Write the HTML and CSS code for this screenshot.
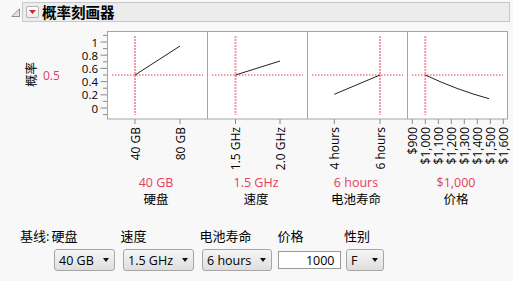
FILE: index.html
```html
<!DOCTYPE html>
<html lang="zh">
<head>
<meta charset="utf-8" />
<title>概率刻画器</title>
<link rel="stylesheet" href="styles.css">
</head>
<body>
<div class="outline">
  <svg class="disclose" width="9" height="9" viewBox="0 0 9 9"><path d="M8.5,0.8 L8.5,8.5 L0.8,8.5 Z" fill="#e4e4e4" stroke="#8c8c8c" stroke-width="1"/></svg>
  <div class="bar">
    <span class="menu-btn"><svg width="7" height="4" viewBox="0 0 7 4"><path d="M0,0 L7,0 L3.5,4 Z" fill="#e0202e"/></svg></span>
    <span class="title">概率刻画器</span>
  </div>
</div>

<svg class="profiler" width="513" height="147" viewBox="0 28 513 147">
  <text class="axis-title" transform="translate(31.5,74.5) rotate(-90)">概率</text>
  <text class="ref-val" x="43" y="75.5">0.5</text>

  <!-- y axis -->
  <g class="ticks">
    <line x1="103" y1="114.6" x2="107" y2="114.6"/>
    <line x1="100.5" y1="108" x2="107" y2="108"/>
    <line x1="103" y1="101.4" x2="107" y2="101.4"/>
    <line x1="100.5" y1="94.8" x2="107" y2="94.8"/>
    <line x1="103" y1="88.2" x2="107" y2="88.2"/>
    <line x1="100.5" y1="81.6" x2="107" y2="81.6"/>
    <line x1="103" y1="75" x2="107" y2="75"/>
    <line x1="100.5" y1="68.4" x2="107" y2="68.4"/>
    <line x1="103" y1="61.8" x2="107" y2="61.8"/>
    <line x1="100.5" y1="55.2" x2="107" y2="55.2"/>
    <line x1="103" y1="48.6" x2="107" y2="48.6"/>
    <line x1="100.5" y1="42" x2="107" y2="42"/>
    <line x1="103" y1="35.4" x2="107" y2="35.4"/>
  </g>
  <g class="y-labels">
    <text x="98" y="108">0</text>
    <text x="98" y="94.8">0.2</text>
    <text x="98" y="81.6">0.4</text>
    <text x="98" y="68.4">0.6</text>
    <text x="98" y="55.2">0.8</text>
    <text x="98" y="42">1</text>
  </g>

  <!-- panels -->
  <rect class="frame" x="107.5" y="31.5" width="400" height="87.5"/>
  <line class="frame" x1="207.5" y1="31.5" x2="207.5" y2="119"/>
  <line class="frame" x1="307.5" y1="31.5" x2="307.5" y2="119"/>
  <line class="frame" x1="407.5" y1="31.5" x2="407.5" y2="119"/>

  <g class="h-ref">
    <line x1="112" y1="75" x2="203" y2="75"/>
    <line x1="212" y1="75" x2="303" y2="75"/>
    <line x1="312" y1="75" x2="403" y2="75"/>
    <line x1="412" y1="75" x2="503" y2="75"/>
  </g>
  <g class="v-ref">
    <line x1="135" y1="36" x2="135" y2="115"/>
    <line x1="235.5" y1="36" x2="235.5" y2="115"/>
    <line x1="380" y1="36" x2="380" y2="115"/>
    <line x1="425.3" y1="36" x2="425.3" y2="115"/>
  </g>
  <g class="curve">
    <path d="M135,75 L180,46"/>
    <path d="M235.5,75 L280,61"/>
    <path d="M334.3,94.3 L380,75"/>
    <path d="M425.3,75 Q457,90 489,98.7"/>
  </g>

  <!-- x axes -->
  <g class="ticks">
    <line x1="135" y1="119" x2="135" y2="124"/>
    <line x1="180" y1="119" x2="180" y2="124"/>
    <line x1="235.5" y1="119" x2="235.5" y2="124"/>
    <line x1="280" y1="119" x2="280" y2="124"/>
    <line x1="334.3" y1="119" x2="334.3" y2="124"/>
    <line x1="380" y1="119" x2="380" y2="124"/>
    <line x1="412.3" y1="119" x2="412.3" y2="124"/>
    <line x1="425.3" y1="119" x2="425.3" y2="124"/>
    <line x1="438.3" y1="119" x2="438.3" y2="124"/>
    <line x1="451.3" y1="119" x2="451.3" y2="124"/>
    <line x1="464.3" y1="119" x2="464.3" y2="124"/>
    <line x1="477.3" y1="119" x2="477.3" y2="124"/>
    <line x1="490.3" y1="119" x2="490.3" y2="124"/>
    <line x1="503.3" y1="119" x2="503.3" y2="124"/>
  </g>
  <g class="x-labels">
    <text transform="translate(135,127) rotate(-90)">40 GB</text>
    <text transform="translate(180,127) rotate(-90)">80 GB</text>
    <text transform="translate(235.5,127) rotate(-90)">1.5 GHz</text>
    <text transform="translate(280,127) rotate(-90)">2.0 GHz</text>
    <text transform="translate(334.3,127) rotate(-90)">4 hours</text>
    <text transform="translate(380,127) rotate(-90)">6 hours</text>
    <text transform="translate(412.3,127) rotate(-90)">$900</text>
    <text transform="translate(425.3,127) rotate(-90)">$1,000</text>
    <text transform="translate(438.3,127) rotate(-90)">$1,100</text>
    <text transform="translate(451.3,127) rotate(-90)">$1,200</text>
    <text transform="translate(464.3,127) rotate(-90)">$1,300</text>
    <text transform="translate(477.3,127) rotate(-90)">$1,400</text>
    <text transform="translate(490.3,127) rotate(-90)">$1,500</text>
    <text transform="translate(503.3,127) rotate(-90)">$1,600</text>
  </g>
</svg>

<div class="levels">
  <div class="level"><div class="level-value">40 GB</div><div class="level-name">硬盘</div></div>
  <div class="level"><div class="level-value">1.5 GHz</div><div class="level-name">速度</div></div>
  <div class="level"><div class="level-value">6 hours</div><div class="level-name">电池寿命</div></div>
  <div class="level"><div class="level-value">$1,000</div><div class="level-name">价格</div></div>
</div>

<div class="baseline">
  <span class="base-label">基线:</span>
  <div class="field">
    <span class="field-label">硬盘</span>
    <span class="select w-disk">40 GB<i class="caret"></i></span>
  </div>
  <div class="field">
    <span class="field-label">速度</span>
    <span class="select w-speed">1.5 GHz<i class="caret"></i></span>
  </div>
  <div class="field">
    <span class="field-label">电池寿命</span>
    <span class="select w-battery">6 hours<i class="caret"></i></span>
  </div>
  <div class="field">
    <span class="field-label">价格</span>
    <input class="price-input" type="text" value="1000">
  </div>
  <div class="field field-gender">
    <span class="field-label">性别</span>
    <span class="select w-gender">F<i class="caret"></i></span>
  </div>
</div>
</body>
</html>
```

FILE: styles.css
```css
body {
  margin:0; background:#f8f8f8; color:#000;
  font-family:"Open Sans","Noto Sans CJK SC",sans-serif; font-size:13px;
}
.outline {
  display:flex; align-items:center; padding:2px 3px 0 11px; height:20px;
}
.disclose { margin-right:2px; margin-top:1px; }
.bar {
  flex:1; height:18px; display:flex; align-items:center; gap:3px;
  background:#ececec; border:1px solid #c8c8c8; padding-left:3px;
}
.menu-btn {
  width:11px; height:10px; display:flex; align-items:center; justify-content:center;
  border:1px solid #b4b4b4; border-radius:2px; background:linear-gradient(#fff,#ececec);
}
.title {
  font-family:"Noto Sans CJK SC",sans-serif; font-weight:700; font-size:14.5px; line-height:18px;
}
.profiler { display:block; margin-top:6px; }
.profiler text { font-family:"Open Sans","Noto Sans CJK SC",sans-serif; font-size:12px; dominant-baseline:central; }
.profiler .axis-title { font-size:12.5px; text-anchor:middle; }
.profiler .ref-val { fill:#e63d5c; }
.profiler .y-labels text { text-anchor:end; font-size:11.5px; }
.x-labels text { text-anchor:end; }
.ticks line { stroke:#8a8a8a; stroke-width:1; }
.frame { fill:#fff; stroke:#a4a4a4; stroke-width:1; }
line.frame { fill:none; }
.h-ref line { stroke:#d4385a; stroke-width:1; stroke-dasharray:1.5 1.5; }
.v-ref line { stroke:#f29aac; stroke-width:2; stroke-dasharray:2 1; }
.curve path { fill:none; stroke:#222; stroke-width:1; }

.levels {
  display:grid; grid-template-columns:repeat(4,100px); padding-left:106px;
}
.level { text-align:center; }
.level-value { color:#e63d5c; font-size:12.5px; line-height:16px; }
.level-name { font-size:12.5px; line-height:17px; }

.baseline {
  display:flex; align-items:flex-start; gap:5.5px; padding:20px 0 0 20px;
}
.base-label { flex:none; width:26px; min-width:0; white-space:nowrap; line-height:17px; }
.field { display:flex; flex-direction:column; }
.field-label { line-height:17px; margin-bottom:4px; white-space:nowrap; }
.select {
  height:20px; margin-left:2.5px; padding:0 5px 0 4px;
  display:flex; align-items:center; justify-content:space-between;
  border:1px solid #a6a6a6; border-radius:3px;
  background:linear-gradient(#f6f6f6,#dedede);
  font-size:12.5px;
}
.caret {
  width:0; height:0; border-left:3.5px solid transparent; border-right:3.5px solid transparent;
  border-top:4px solid #111;
}
.w-disk { width:50px; }
.w-speed { width:60px; }
.w-battery { width:59px; }
.w-gender { width:27px; margin-left:2px; }
.field-gender { margin-left:-2px; }
.price-input {
  box-sizing:border-box; width:63px; height:18px; margin:2px 0 0 0; padding:0 5px 0 0;
  border:1px solid #9a9a9a; background:#fff; text-align:right;
  font-family:"Open Sans",sans-serif; font-size:12.5px; color:#000;
}
```
